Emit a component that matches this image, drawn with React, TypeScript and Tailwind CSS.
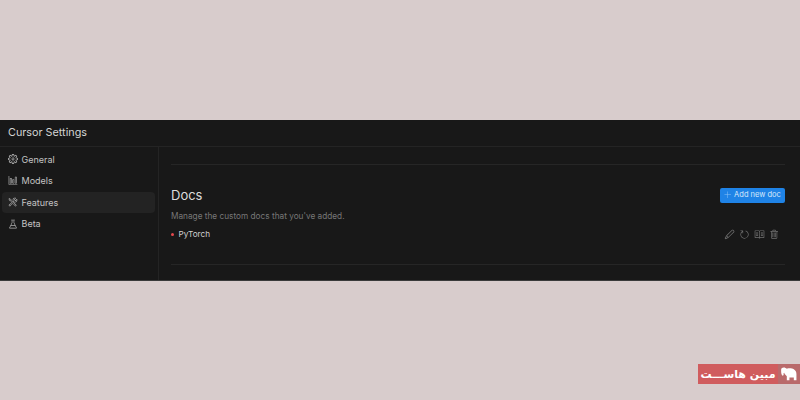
import { VscSettingsGear, VscGraph, VscTools, VscBeaker, VscAdd, VscEdit, VscRefresh, VscBook, VscTrash } from "react-icons/vsc";

const FONT = "font-['Inter','Liberation_Sans',sans-serif]";

const NAV = [
  { label: "General", icon: VscSettingsGear },
  { label: "Models", icon: VscGraph },
  { label: "Features", icon: VscTools, active: true },
  { label: "Beta", icon: VscBeaker },
];

export default function App() {
  return (
    <div className={`w-[800px] h-[400px] overflow-hidden bg-[#d8cccc] flex flex-col ${FONT}`}>
      <div className="h-[120px] shrink-0" />

      {/* settings window */}
      <div className="h-[161px] shrink-0 bg-[#181818] flex flex-col border-b border-[#3a3a3a]">
        <div className="h-[27px] shrink-0 border-b border-[#242424] flex items-center pl-[8px] pt-[1px] text-[10.8px] text-[#d4d4d4]">
          Cursor Settings
        </div>
        <div className="flex flex-1 min-h-0">
          <div className="w-[159px] shrink-0 border-r border-[#242424] pt-[2px] pl-[2px] pr-[3px] flex flex-col gap-[1px]">
            {NAV.map((item) => {
              const Icon = item.icon;
              return (
                <div
                  key={item.label}
                  className={`h-[20.5px] rounded-sm flex items-center gap-[3.500px] pl-[6px] text-[9px] text-[#c4c4c4] ${item.active ? "bg-[#232323]" : ""}`}
                >
                  <Icon size={10} className="text-[#b0b0b0]" />
                  {item.label}
                </div>
              );
            })}
          </div>

          <div className="flex-1 pl-[12px] pr-[15px] flex flex-col">
            <div className="h-[18px] shrink-0 border-b border-[#262626]" />
            <div className="flex items-center justify-between mt-[21px] h-[18px]">
              <span className="text-[13px] pt-[2px] text-[#dcdcdc]">Docs</span>
              <div className="w-[65px] h-[15px] bg-[#1f83e6] rounded-[2px] flex items-center justify-center gap-[2px] text-[7.5px] text-[#d7e9fb]">
                <VscAdd size={8} className="text-[#8cc2f5]" />
                Add new doc
              </div>
            </div>
            <div className="mt-[6px] text-[8.25px] leading-[12px] text-[#777777]">Manage the custom docs that you've added.</div>
            <div className="mt-[6px] flex items-center justify-between h-[13px]">
              <div className="flex items-center gap-[4.500px] text-[8.2px] text-[#d0d0d0]">
                <span className="w-[3px] h-[3px] rounded-full bg-[#e5484d]" />
                PyTorch
              </div>
              <div className="flex items-center gap-[4px] text-[#707070] pr-[5px]">
                <VscEdit size={11} />
                <VscRefresh size={11} />
                <VscBook size={11} />
                <VscTrash size={11} />
              </div>
            </div>
            <div className="mt-[23px] border-b border-[#262626]" />
          </div>
        </div>
      </div>

      {/* watermark */}
      <div className="flex justify-end mt-[83px]">
        <div className="w-[80px] h-[20px] bg-[#d05c5e] flex items-center justify-center whitespace-nowrap text-[11px] leading-none font-bold text-white font-['DejaVu_Sans',sans-serif]" dir="rtl">
          مبین هاســـت
        </div>
        <div className="w-[22px] h-[20px] bg-[#b96a6b] flex items-center justify-center">
          <svg width="18" height="14" viewBox="0 0 20 16" className="text-white">
            <path
              fill="currentColor"
              d="M1 3c0-1.500 1.500-2.500 3-2.500 1.500 0 2.500.7 3.500 1.500 2-.8 6-.8 8 .5 2 1.200 3 3 3 5.500V15h-3v-3h-5v3h-3v-4.500C6 9 5 8 4.500 6.500 3.500 7 3.500 8 4 9L2.500 10C1 8 1 6 1 3z"
            />
          </svg>
        </div>
      </div>
    </div>
  );
}
